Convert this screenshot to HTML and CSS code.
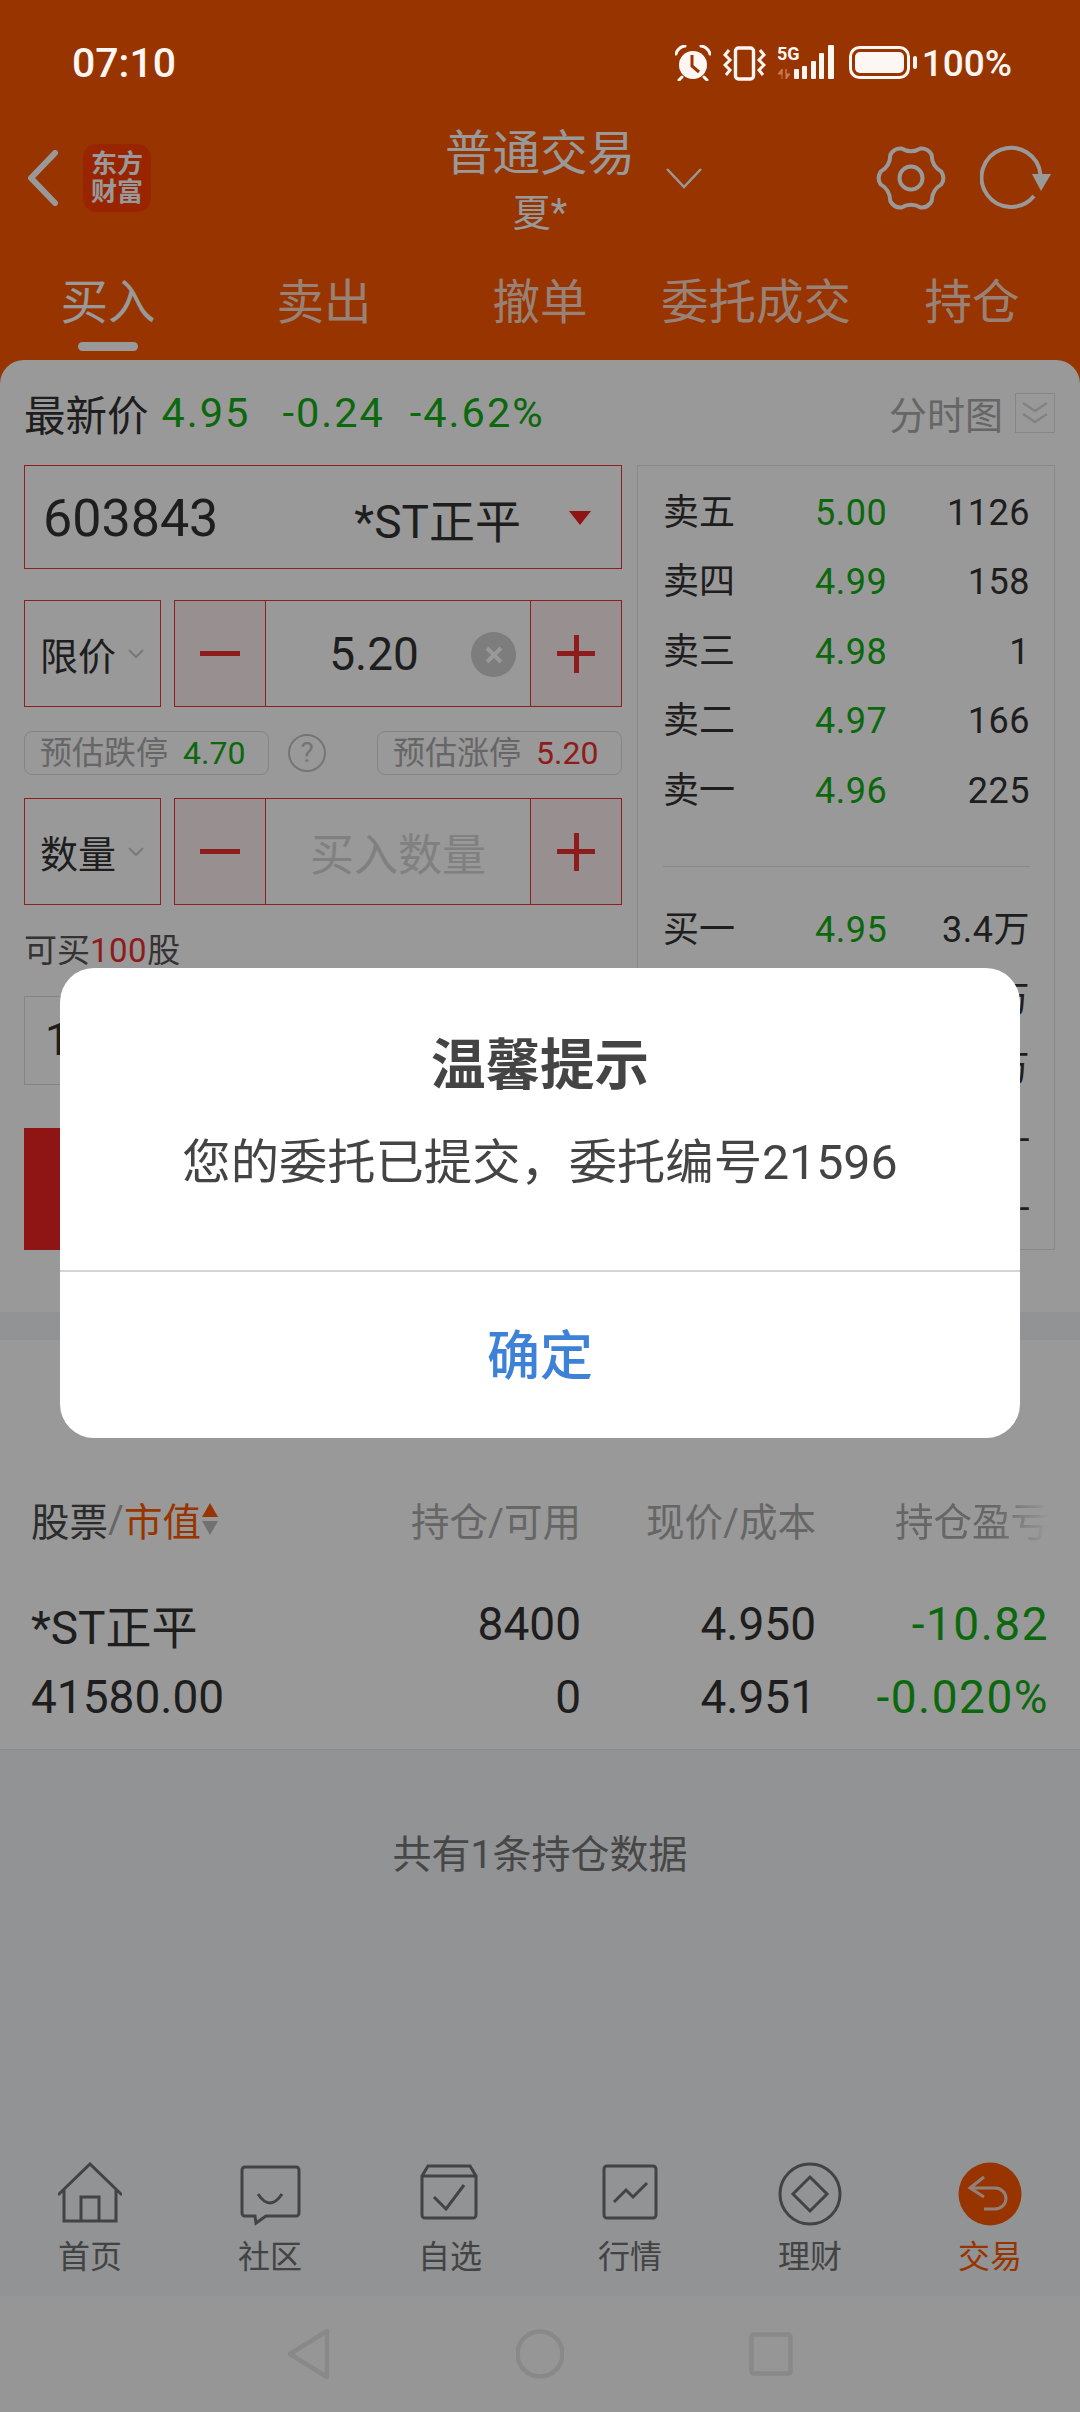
FILE: index.html
```html
<!DOCTYPE html>
<html lang="zh-CN">
<head>
  <meta charset="UTF-8">
  <meta name="viewport" content="width=device-width, initial-scale=1.0">
  <title>普通交易</title>
  <link rel="stylesheet" href="styles.css">
</head>
<body>
<div class="app">
  <header class="top">
    <div class="status">
      <span class="time">07:10</span>
      <div class="status-icons">
        <svg class="st-alarm" width="36" height="36" viewBox="0 0 36 36">
          <circle cx="18" cy="20" r="14" fill="#fdf6f2"/>
          <path d="M1 9 Q3 2 10 1 M35 9 Q33 2 26 1 M7 32 L4 35 M29 32 L32 35" fill="none" stroke="#fdf6f2" stroke-width="3" stroke-linecap="round"/>
          <path d="M17 10 V21 L24 27" fill="none" stroke="#983500" stroke-width="3"/>
        </svg>
        <svg class="st-vib" width="43" height="36" viewBox="0 0 43 36" fill="none" stroke="#fdf6f2">
          <rect x="12.5" y="3" width="18" height="31" rx="3" stroke-width="3.4"/>
          <path d="M6 5 L2 10 L7 15 L2 20 L7 25 L3 30 M37 5 L41 10 L36 15 L41 20 L36 25 L40 30" stroke-width="3"/>
        </svg>
        <svg class="st-signal" width="58" height="36" viewBox="0 0 58 36">
          <text x="0" y="15" class="st-5g">5G</text>
          <path d="M5 24 L1 29 H5 Z M5 24 V34 M9 24 V34 L13 29 H9 Z" fill="#c77a55" stroke="#c77a55"/>
          <rect x="17" y="24" width="5" height="10" rx="1" fill="#fdf6f2"/>
          <rect x="25" y="21" width="5" height="13" rx="1" fill="#fdf6f2"/>
          <rect x="34" y="16" width="5" height="18" rx="1" fill="#fdf6f2"/>
          <rect x="42" y="8" width="5" height="26" rx="1" fill="#fdf6f2"/>
          <rect x="51" y="0" width="6" height="34" rx="1" fill="#fdf6f2"/>
        </svg>
        <svg class="st-batt" width="68" height="34" viewBox="0 0 68 34">
          <rect x="1.5" y="1.5" width="58" height="30" rx="9" fill="none" stroke="#fdf6f2" stroke-width="3"/>
          <rect x="6" y="6" width="49" height="21" rx="5" fill="#fdf6f2"/>
          <rect x="64" y="10" width="4" height="13" rx="2" fill="#fdf6f2"/>
        </svg>
        <span class="pct">100%</span>
      </div>
    </div>

    <div class="navrow">
      <div class="nav-left">
        <svg width="32" height="56" viewBox="0 0 32 56"><path d="M28 3 L4 28 L28 53" class="hd-line"/></svg>
        <div class="logo"><span>东方</span><span>财富</span></div>
      </div>
      <div class="nav-title">
        <span></span>
        <div class="title-text">
          <div class="title-main">普通交易</div>
          <div class="title-sub">夏*</div>
        </div>
        <svg class="title-chev" width="36" height="22" viewBox="0 0 36 22"><path d="M1 2 L18 20 L35 2" class="hd-thin"/></svg>
      </div>
      <div class="nav-right">
        <svg width="72" height="66" viewBox="-2 -1 72 66"><path d="M43.6 2.5 Q51.25 2.1 54.7 9 Q54.8 20 64.3 25.6 Q68.5 32 64.3 38.4 Q54.8 44 54.7 55 Q51.25 61.9 43.6 61.5 Q34 56 24.4 61.5 Q16.75 61.9 13.3 55 Q13.2 44 3.7 38.4 Q-.5 32 3.7 25.6 Q13.2 20 13.3 9 Q16.75 2.1 24.4 2.5 Q34 8 43.6 2.5 Z" class="hd-gear"/><circle cx="34" cy="32" r="11.500" class="hd-gear"/></svg>
        <svg width="72" height="66" viewBox="0 0 72 66"><path d="M54 51 A29.5 29.5 0 1 1 60.500 30" class="hd-gear"/><path d="M52 29 H71 L61 46 Z" class="hd-fill"/></svg>
      </div>
    </div>

    <nav class="tabs">
      <div class="tab tab-on">买入</div>
      <div class="tab">卖出</div>
      <div class="tab">撤单</div>
      <div class="tab">委托成交</div>
      <div class="tab">持仓</div>
    </nav>
  </header>

  <main class="panel">
    <section class="trade">
      <div class="quote">
        <span class="q-label">最新价</span>
        <span class="green q-num">4.95</span>
        <span class="green q-num q-chg">-0.24</span>
        <span class="green q-num">-4.62%</span>
        <span class="q-chart">分时图</span>
        <span class="q-fold">
          <svg width="28" height="24" viewBox="0 0 28 24"><path d="M2 2 L14 10 L26 2 M2 13 L14 21 L26 13" fill="none" stroke="#d9d9d9" stroke-width="2.500"/></svg>
        </span>
      </div>

      <div class="trade-grid">
        <div class="form">
          <div class="code-box">
            <span class="code">603843</span>
            <span class="code-name">*ST正平</span>
            <span class="code-tri"></span>
          </div>

          <div class="input-row row-price">
            <div class="sel">限价<svg width="16" height="10" viewBox="0 0 16 10"><path d="M1 1 L8 8 L15 1" class="sel-chev"/></svg></div>
            <div class="stepper">
              <div class="step"><span class="minus"></span></div>
              <div class="step-mid">
                <span class="price-val">5.20</span>
                <span class="clear">
                  <svg width="20" height="20" viewBox="0 0 20 20"><path d="M3 3 L17 17 M17 3 L3 17" stroke="#fff" stroke-width="4"/></svg>
                </span>
              </div>
              <div class="step"><span class="plus"></span></div>
            </div>
          </div>

          <div class="limits">
            <div class="pill"><span>预估跌停</span><span class="green pill-num">4.70</span></div>
            <span class="help">?</span>
            <div class="pill"><span>预估涨停</span><span class="red pill-num">5.20</span></div>
          </div>

          <div class="input-row">
            <div class="sel">数量<svg width="16" height="10" viewBox="0 0 16 10"><path d="M1 1 L8 8 L15 1" class="sel-chev"/></svg></div>
            <div class="stepper">
              <div class="step"><span class="minus"></span></div>
              <div class="step-mid step-hint">买入数量</div>
              <div class="step"><span class="plus"></span></div>
            </div>
          </div>

          <div class="canbuy">可买<span class="red canbuy-num">100</span>股</div>
          <div class="ratio"><span>1/4</span></div>
          <div class="buy-btn">买入</div>
        </div>

        <div class="book">
          <div class="book-row"><span>卖五</span><span class="green">5.00</span><span class="vol">1126</span></div>
          <div class="book-row"><span>卖四</span><span class="green">4.99</span><span class="vol">158</span></div>
          <div class="book-row"><span>卖三</span><span class="green">4.98</span><span class="vol">1</span></div>
          <div class="book-row"><span>卖二</span><span class="green">4.97</span><span class="vol">166</span></div>
          <div class="book-row"><span>卖一</span><span class="green">4.96</span><span class="vol">225</span></div>
          <div class="book-line"></div>
          <div class="book-row"><span>买一</span><span class="green">4.95</span><span class="vol">3.4万</span></div>
          <div class="book-row"><span>买二</span><span class="green">4.94</span><span class="vol">1.2万</span></div>
          <div class="book-row"><span>买三</span><span class="green">4.93</span><span class="vol">1.1万</span></div>
          <div class="book-row"><span>买四</span><span>--</span><span class="vol">--</span></div>
          <div class="book-row"><span>买五</span><span>--</span><span class="vol">--</span></div>
        </div>
      </div>
    </section>

    <div class="band"></div>

    <section class="holdings">
      <div class="h-grid h-head">
        <div class="h-first">股票<span class="slash">/</span><span class="accent">市值</span>
          <svg width="16" height="32" viewBox="0 0 16 32"><path d="M8 0 L16 14 H0 Z" fill="#fd5800"/><path d="M8 32 L16 18 H0 Z" fill="#bdbdbd"/></svg>
        </div>
        <div class="h-num">持仓/可用</div>
        <div class="h-num">现价/成本</div>
        <div class="h-num"><span class="h-fade">持仓盈亏</span></div>
      </div>
      <div class="h-grid h-row">
        <div>*ST正平</div><div class="h-num">8400</div><div class="h-num">4.950</div><div class="h-num green h-pl">-10.82</div>
      </div>
      <div class="h-grid h-row">
        <div>41580.00</div><div class="h-num">0</div><div class="h-num">4.951</div><div class="h-num green h-pl">-0.020%</div>
      </div>
    </section>

    <section class="lower">
      <div class="empty">共有1条持仓数据</div>
      <div class="tabbar">
        <div class="tb-item">
          <svg width="64" height="64" viewBox="0 0 64 64" class="ico"><path d="M0 33 L32 2 L64 33 M6 28 V59 H58 V28 M23 59 V35 H41 V59"/></svg>
          <span>首页</span>
        </div>
        <div class="tb-item">
          <svg width="64" height="64" viewBox="0 0 64 64" class="ico"><path d="M7 5 H58 a3 3 0 0 1 3 3 V51 a3 3 0 0 1 -3 3 H28 L18 61 L17 54 H7 a3 3 0 0 1 -3 -3 V8 a3 3 0 0 1 3 -3 Z M20 32 Q32 50 44 32"/></svg>
          <span>社区</span>
        </div>
        <div class="tb-item">
          <svg width="64" height="64" viewBox="0 0 64 64" class="ico"><path d="M4 14 L10 4 H52 L58 14 V53 a3 3 0 0 1 -3 3 H7 a3 3 0 0 1 -3 -3 Z M4 14 H58 M16 35 L28 47 L46 23"/></svg>
          <span>自选</span>
        </div>
        <div class="tb-item">
          <svg width="64" height="64" viewBox="0 0 64 64" class="ico"><rect x="6" y="4" width="52" height="52" rx="3"/><path d="M16 40 L28 28 L35 35 L49 21"/></svg>
          <span>行情</span>
        </div>
        <div class="tb-item">
          <svg width="64" height="64" viewBox="0 0 64 64" class="ico"><circle cx="32" cy="32" r="30"/><path d="M32 15 L49 32 L32 49 L15 32 Z"/></svg>
          <span>理财</span>
        </div>
        <div class="tb-item tb-on">
          <svg width="64" height="64" viewBox="0 0 64 64"><circle cx="32" cy="32" r="31.500" fill="#fd5800"/><path d="M26 15 L12 26 L26 35 M12 26 H37 a11 10.500 0 0 1 0 21 H26" fill="none" stroke="#f2d8cc" stroke-width="3"/></svg>
          <span>交易</span>
        </div>
      </div>
    </section>

    <footer class="sysnav">
      <svg width="44" height="52" viewBox="0 0 44 52" class="sys-ico"><path d="M40 3 V49 L3 26 Z"/></svg>
      <svg width="48" height="52" viewBox="0 0 48 52" class="sys-ico"><circle cx="24" cy="26" r="22.500"/></svg>
      <svg width="44" height="44" viewBox="0 0 44 44" class="sys-ico"><rect x="2.500" y="2.500" width="39" height="39" rx="2"/></svg>
    </footer>
  </main>

  <div class="scrim"></div>
  <div class="dialog">
    <div class="dialog-body">
      <div class="dialog-title">温馨提示</div>
      <div class="dialog-msg">您的委托已提交，委托编号21596</div>
    </div>
    <div class="dialog-ok">确定</div>
  </div>
</div>
</body>
</html>
```

FILE: styles.css
```css
* {
  box-sizing: border-box;
}
body {
  margin: 0;
  font-family: Roboto, 'Noto Sans CJK SC', sans-serif;
  color: #333;
}
.app {
  position: relative;
  width: 1080px;
  height: 2412px;
  overflow: hidden;
  background: #fd5800;
  display: flex;
  flex-direction: column;
}
.green { color: #14ad14; }
.red { color: #ee2f2f; }

/* header */
.top {
  height: 360px;
  flex: none;
}
.status {
  position: relative;
  z-index: 3;
  height: 126px;
  padding: 0 68px 0 72px;
  display: flex;
  align-items: center;
  color: #fdf6f2;
}
.time {
  font-size: 41px;
  font-weight: 500;
}
.status-icons {
  margin-left: auto;
  display: flex;
  align-items: center;
}
.st-vib { margin-left: 12px; }
.st-signal { margin-left: 11px; }
.st-batt { margin-left: 14px; }
.st-5g {
  font-family: Roboto, sans-serif;
  font-size: 18px;
  font-weight: 700;
  fill: #fdf6f2;
}
.pct {
  margin-left: 5px;
  font-size: 37px;
  font-weight: 500;
}
.navrow {
  height: 124px;
  padding-bottom: 20px;
  display: flex;
  align-items: center;
  color: #fff;
}
.nav-left {
  width: 300px;
  padding-left: 27px;
  display: flex;
  align-items: center;
  gap: 24px;
}
.logo {
  width: 68px;
  height: 68px;
  border-radius: 14px;
  background: #ff3c00;
  display: flex;
  flex-direction: column;
  align-items: center;
  justify-content: center;
  font-size: 26px;
  line-height: 28px;
  font-weight: 700;
}
.hd-line { fill: none; stroke: #fff; stroke-width: 6; stroke-linecap: round; stroke-linejoin: round; }
.hd-thin { fill: none; stroke: #fff; stroke-width: 2.5; }
.hd-gear { fill: none; stroke: #fff; stroke-width: 4; }
.hd-fill { fill: #fff; }
.nav-title {
  flex: 1;
  display: grid;
  grid-template-columns: 1fr auto 1fr;
  align-items: center;
}
.title-text {
  text-align: center;
  margin-top: 9px;
}
.title-main {
  font-size: 47.5px;
  line-height: 60px;
}
.title-sub {
  font-size: 38px;
  line-height: 58px;
}
.title-chev { margin-left: 31px; }
.nav-right {
  width: 300px;
  display: flex;
  align-items: center;
  gap: 33px;
  padding-left: 95px;
}
.tabs {
  height: 110px;
  display: grid;
  grid-template-columns: repeat(5, 1fr);
}
.tab {
  position: relative;
  text-align: center;
  font-size: 47.5px;
  line-height: 106px;
  color: #ffd9c4;
}
.tab-on { color: #fff; }
.tab-on::after {
  content: "";
  position: absolute;
  left: 78px;
  top: 92px;
  width: 60px;
  height: 9px;
  border-radius: 5px;
  background: #fff;
}

/* panel */
.panel {
  flex: 1;
  background: #fff;
  border-radius: 24px 24px 0 0;
  display: flex;
  flex-direction: column;
}
.trade {
  height: 952px;
  flex: none;
  padding: 0 25px 0 24px;
}
.quote {
  height: 105px;
  display: flex;
  align-items: center;
  font-size: 41.5px;
}
.q-num { margin-left: 13px; letter-spacing: 2px; }
.q-chg { margin-left: 32px; margin-right: 12px; }
.q-chart {
  margin-left: auto;
  font-size: 38px;
  color: #aaa;
}
.q-fold {
  margin-left: 12px;
  width: 40px;
  height: 40px;
  border: 1px solid #e0e0e0;
  display: flex;
  align-items: center;
  justify-content: center;
}
.trade-grid {
  display: grid;
  grid-template-columns: 598px 418px;
  gap: 15px;
  height: 785px;
}

/* order form */
.code-box {
  height: 104px;
  padding-top: 2px;
  border: 1px solid #ee3333;
  display: flex;
  align-items: center;
  padding-left: 18px;
}
.code { font-size: 52px; }
.code-name {
  margin-left: 136px;
  font-size: 46px;
}
.code-tri {
  margin-left: 48px;
  border-left: 11px solid transparent;
  border-right: 11px solid transparent;
  border-top: 14px solid #ee2222;
}
.input-row {
  display: flex;
  gap: 13px;
  height: 107px;
}
.row-price { margin-top: 31px; }
.sel {
  width: 137px;
  border: 1px solid #ee3333;
  display: flex;
  align-items: center;
  gap: 12px;
  padding-left: 15px;
  font-size: 38px;
}
.sel-chev { fill: none; stroke: #c9c9c9; stroke-width: 2; }
.stepper {
  flex: 1;
  border: 1px solid #ee3333;
  display: flex;
}
.step {
  width: 90px;
  flex: none;
  background: #fdf0f0;
  display: flex;
  align-items: center;
  justify-content: center;
}
.minus {
  width: 40px;
  height: 5px;
  background: #ee2f2f;
}
.plus {
  position: relative;
  width: 38px;
  height: 38px;
  background: linear-gradient(#ee2f2f, #ee2f2f) center / 38px 5px no-repeat,
              linear-gradient(#ee2f2f, #ee2f2f) center / 5px 38px no-repeat;
}
.step-mid {
  flex: 1;
  position: relative;
  border-left: 1px solid #ee3333;
  border-right: 1px solid #ee3333;
  display: flex;
  align-items: center;
  justify-content: center;
}
.price-val {
  font-size: 46px;
  margin-right: 48px;
}
.clear {
  position: absolute;
  right: 14px;
  top: 31px;
  width: 45px;
  height: 45px;
  border-radius: 50%;
  background: #d0d0d0;
  display: flex;
  align-items: center;
  justify-content: center;
}
.step-hint {
  font-size: 44px;
  color: #d5d5d5;
}
.limits {
  margin: 24px 0 23px;
  height: 44px;
  display: flex;
  align-items: center;
}
.pill {
  width: 245px;
  height: 44px;
  border: 1px solid #dcdcdc;
  border-radius: 8px;
  padding-left: 15px;
  font-size: 32px;
  line-height: 42px;
  color: #aaa;
  white-space: nowrap;
}
.pill-num { margin-left: 15px; }
.help {
  margin: 0 51px 0 19px;
  width: 38px;
  height: 38px;
  border: 2px solid #c4c4c4;
  border-radius: 50%;
  font-size: 28px;
  line-height: 34px;
  text-align: center;
  color: #c4c4c4;
}
.canbuy {
  margin-top: 26px;
  height: 40px;
  margin-bottom: 25px;
  font-size: 33px;
  line-height: 40px;
  color: #555;
}
.canbuy-num { letter-spacing: 0.5px; }
.ratio {
  height: 89px;
  border: 1px solid #ddd;
  padding-left: 20px;
  font-size: 44px;
  line-height: 87px;
}
.buy-btn {
  margin-top: 43px;
  height: 122px;
  background: #ef2222;
  color: #fff;
  text-align: center;
  font-size: 46px;
  line-height: 122px;
}

/* five levels */
.book {
  border: 1px solid #e4e4e4;
  padding: 12px 24px 0 25px;
  overflow: hidden;
}
.book-row {
  height: 69.500px;
  display: grid;
  grid-template-columns: 152px 110px 1fr;
  align-items: center;
  font-size: 36px;
  line-height: 46px;
}
.book-row .green,
.book-row .vol {
  font-size: 36px;
  letter-spacing: 0.5px;
}
.vol { text-align: right; }
.book-line {
  margin: 40px 0 29px;
  border-top: 1px solid #e4e4e4;
}

.band {
  height: 28px;
  flex: none;
  background: #f3f5f8;
}

/* holdings */
.holdings {
  height: 409px;
  flex: none;
  padding: 149px 31px 0 31px;
}
.h-grid {
  display: grid;
  grid-template-columns: 340px 210px 235px 233px;
  align-items: center;
}
.h-head {
  height: 60px;
  margin-bottom: 38px;
  font-size: 38.5px;
  color: #aaa;
}
.h-first {
  display: flex;
  align-items: center;
  color: #4a4a4a;
}
.h-first svg { margin-left: 1px; }
.slash { color: #aaa; }
.accent { color: #fd5800; }
.h-num { text-align: right; }
.h-fade {
  -webkit-mask-image: linear-gradient(to right, #000 65%, transparent 100%);
  mask-image: linear-gradient(to right, #000 65%, transparent 100%);
}
.h-row {
  height: 73px;
  font-size: 46px;
}
.h-pl { letter-spacing: 1.5px; }

/* lower area */
.lower {
  flex: 1;
  background: #f3f5f8;
  border-top: 1px solid #e8eaee;
  display: flex;
  flex-direction: column;
}
.empty {
  margin-top: 75px;
  text-align: center;
  font-size: 39px;
  line-height: 60px;
  color: #777;
}
.tabbar {
  margin-top: auto;
  height: 146px;
  padding-top: 12px;
  display: grid;
  grid-template-columns: repeat(6, 1fr);
}
.tb-item {
  display: flex;
  flex-direction: column;
  align-items: center;
  font-size: 32px;
  line-height: 62px;
  color: #707070;
}
.ico {
  fill: none;
  stroke: #707070;
  stroke-width: 3;
}
.tb-on { color: #fd5800; }
.sysnav {
  height: 116px;
  flex: none;
  background: #fbfbfb;
  display: flex;
  align-items: center;
  justify-content: center;
  gap: 185px;
}
.sys-ico {
  fill: none;
  stroke: #e4e4e4;
  stroke-width: 4.5;
  stroke-linejoin: round;
}

/* overlay */
.scrim {
  position: absolute;
  inset: 0;
  z-index: 1;
  background: rgba(0, 0, 0, 0.4);
}
.dialog {
  position: absolute;
  z-index: 2;
  left: 60px;
  top: 968px;
  width: 960px;
  height: 470px;
  border-radius: 34px;
  background: #fff;
  text-align: center;
  color: #444;
}
.dialog-body {
  height: 304px;
  padding-top: 57px;
  border-bottom: 2px solid #d4d4d4;
}
.dialog-title {
  font-size: 54.5px;
  line-height: 80px;
  font-weight: 700;
}
.dialog-msg {
  margin-top: 23px;
  font-size: 48.3px;
  line-height: 70px;
}
.dialog-ok {
  font-size: 53px;
  line-height: 170px;
  font-weight: 500;
  color: #3e82d8;
}
```
